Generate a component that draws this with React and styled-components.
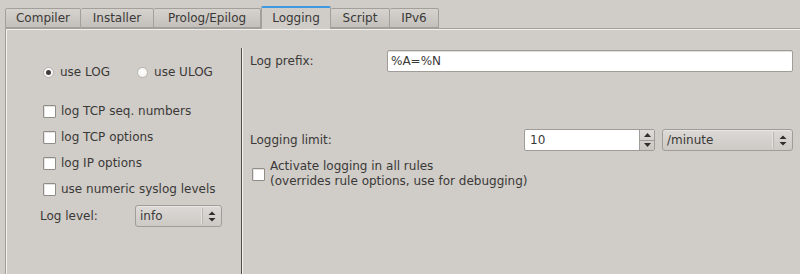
import React from 'react';
import styled, { createGlobalStyle } from 'styled-components';

const GlobalStyle = createGlobalStyle`
  html, body {
    margin: 0;
    padding: 0;
    background: #d0ccc8;
  }
  body {
    font-family: "DejaVu Sans", "Liberation Sans", sans-serif;
    font-size: 12px;
    color: #3a3937;
  }
`;

const Window = styled.div`
  width: 800px;
  height: 274px;
  background: #d0ccc8;
  overflow: hidden;
  display: flex;
  flex-direction: column;
`;

const TabBar = styled.div`
  display: flex;
  align-items: flex-end;
  height: 28px;
  padding-left: 5px;
  position: relative;
  z-index: 1;
`;

const Tab = styled.div`
  box-sizing: border-box;
  width: ${(p) => p.$w}px;
  height: ${(p) => (p.$active ? '23px' : '20px')};
  display: flex;
  align-items: center;
  justify-content: center;
  margin-bottom: ${(p) => (p.$active ? '-1px' : '0')};
  border: 1px solid #a39f9b;
  border-left: ${(p) => (p.$first || p.$active ? '1px solid #a39f9b' : 'none')};
  border-bottom: ${(p) => (p.$active ? 'none' : '1px solid #a39f9b')};
  border-top: ${(p) => (p.$active ? '2px solid #3f9ae2' : '1px solid #a39f9b')};
  border-radius: 2px 2px 0 0;
  background: ${(p) =>
    p.$active ? '#d0ccc8' : 'linear-gradient(#d6d2ce, #c3bfbb)'};
  color: #3a3937;
  padding-bottom: ${(p) => (p.$active ? '2px' : '0')};
`;

const Panel = styled.div`
  flex: 1;
  display: flex;
  margin-left: 5px;
  border-top: 1px solid #a39f9b;
  border-left: 1px solid #a39f9b;
  box-shadow: inset 1px 1px 0 #f2f0ee;
`;

const LeftColumn = styled.div`
  width: 235px;
  display: flex;
  flex-direction: column;
  padding-top: 33px;
  box-sizing: border-box;
`;

const Row = styled.div`
  display: flex;
  align-items: center;
  height: ${(p) => p.$h || 20}px;
  margin-top: ${(p) => p.$mt || 0}px;
  padding-left: ${(p) => p.$pl || 0}px;
`;

const Option = styled.label`
  display: flex;
  align-items: center;
  gap: ${(p) => p.$gap || 6}px;
  margin-right: ${(p) => p.$mr || 0}px;
  white-space: nowrap;
`;

const Radio = styled.span`
  width: 11px;
  height: 11px;
  box-sizing: border-box;
  border-radius: 50%;
  border: 1px solid #b7b3af;
  background: radial-gradient(circle at 50% 40%, #ffffff, #f1efed);
  display: flex;
  align-items: center;
  justify-content: center;
  &::after {
    content: '';
    width: 5px;
    height: 5px;
    border-radius: 50%;
    background: ${(p) => (p.$checked ? '#3d3c3a' : 'transparent')};
  }
`;

const Check = styled.span`
  width: 13px;
  height: 13px;
  box-sizing: border-box;
  border: 1px solid #908c88;
  border-radius: 1px;
  background: #ffffff;
  box-shadow: inset 1px 1px 0 #e4e2e0;
  flex-shrink: 0;
`;

const Label = styled.span`
  width: ${(p) => p.$w}px;
  white-space: nowrap;
`;

const Combo = styled.div`
  box-sizing: border-box;
  width: ${(p) => p.$w}px;
  height: 22px;
  border: 1px solid #a09c98;
  border-radius: 3px;
  background: linear-gradient(#dcd9d6, #cdc9c5);
  box-shadow: inset 0 1px 0 #e8e6e4;
  display: flex;
  align-items: center;
  padding-left: 4px;
`;

const ComboText = styled.span`
  flex: 1;
`;

const ComboArrows = styled.span`
  width: 18px;
  height: 16px;
  border-left: 1px solid #b9b5b1;
  box-shadow: -1px 0 0 #e6e3e0;
  display: flex;
  align-items: center;
  justify-content: center;
`;

const Separator = styled.div`
  width: 0;
  margin-top: 19px;
  border-left: 1px solid #4f4c49;
  border-right: 1px solid #f4f2f0;
`;

const RightColumn = styled.div`
  flex: 1;
  display: flex;
  flex-direction: column;
  padding: 21px 7px 0 7px;
`;

const TextInput = styled.div`
  box-sizing: border-box;
  height: 22px;
  flex: 1;
  border: 1px solid #a09c98;
  border-radius: 2px;
  background: #ffffff;
  box-shadow: inset 0 1px 0 #e0dedc;
  display: flex;
  align-items: center;
  padding-left: 3px;
`;

const SpinBox = styled.div`
  box-sizing: border-box;
  width: 131px;
  height: 22px;
  border: 1px solid #a09c98;
  border-radius: 2px;
  background: #ffffff;
  display: flex;
  margin-left: auto;
  margin-right: 7px;
`;

const SpinText = styled.span`
  flex: 1;
  display: flex;
  align-items: center;
  padding-left: 5px;
`;

const SpinButtons = styled.div`
  width: 14px;
  display: flex;
  flex-direction: column;
  border-left: 1px solid #a09c98;
  background: linear-gradient(#dedbd8, #cac6c2);
`;

const SpinButton = styled.div`
  flex: 1;
  display: flex;
  align-items: center;
  justify-content: center;
  border-top: ${(p) => (p.$down ? '1px solid #a09c98' : 'none')};
`;

const MultiLine = styled.div`
  display: flex;
  align-items: center;
  gap: 5px;
  margin-top: 8px;
  padding-left: 2px;
  line-height: 15px;
`;

const Arrows = () => (
  <svg width="8" height="11" viewBox="0 0 8 11">
    <path d="M4 0.5 L7.5 4 L0.5 4 Z" fill="#2f2e2c" />
    <path d="M4 10.5 L7.5 7 L0.5 7 Z" fill="#2f2e2c" />
  </svg>
);

const Tri = ({ down }) => (
  <svg width="7" height="4" viewBox="0 0 7 4">
    <path d={down ? 'M0 0 L7 0 L3.5 4 Z' : 'M3.5 0 L7 4 L0 4 Z'} fill="#2f2e2c" />
  </svg>
);

const tabs = [
  { name: 'Compiler', w: 76 },
  { name: 'Installer', w: 73 },
  { name: 'Prolog/Epilog', w: 107 },
  { name: 'Logging', w: 70 },
  { name: 'Script', w: 59 },
  { name: 'IPv6', w: 49 },
];

const checks = [
  'log TCP seq. numbers',
  'log TCP options',
  'log IP options',
  'use numeric syslog levels',
];

export default function App() {
  return (
    <Window>
      <GlobalStyle />
      <TabBar>
        {tabs.map((t, i) => (
          <Tab key={t.name} $w={t.w} $first={i === 0} $active={t.name === 'Logging'}>
            {t.name}
          </Tab>
        ))}
      </TabBar>
      <Panel>
        <LeftColumn>
          <Row $pl={37}>
            <Option $mr={27}>
              <Radio $checked />
              use LOG
            </Option>
            <Option>
              <Radio />
              use ULOG
            </Option>
          </Row>
          {checks.map((c, i) => (
            <Row key={c} $pl={37} $mt={i === 0 ? 19 : 6}>
              <Option $gap={5}>
                <Check />
                {c}
              </Option>
            </Row>
          ))}
          <Row $pl={34} $h={22} $mt={6}>
            <Label $w={95}>Log level:</Label>
            <Combo $w={87}>
              <ComboText>info</ComboText>
              <ComboArrows>
                <Arrows />
              </ComboArrows>
            </Combo>
          </Row>
        </LeftColumn>
        <Separator />
        <RightColumn>
          <Row $h={22}>
            <Label $w={137}>Log prefix:</Label>
            <TextInput>%A=%N</TextInput>
          </Row>
          <Row $h={22} $mt={57}>
            <Label>Logging limit:</Label>
            <SpinBox>
              <SpinText>10</SpinText>
              <SpinButtons>
                <SpinButton>
                  <Tri />
                </SpinButton>
                <SpinButton $down>
                  <Tri down />
                </SpinButton>
              </SpinButtons>
            </SpinBox>
            <Combo $w={131}>
              <ComboText>/minute</ComboText>
              <ComboArrows>
                <Arrows />
              </ComboArrows>
            </Combo>
          </Row>
          <MultiLine>
            <Check />
            <div>
              Activate logging in all rules
              <br />
              (overrides rule options, use for debugging)
            </div>
          </MultiLine>
        </RightColumn>
      </Panel>
    </Window>
  );
}
